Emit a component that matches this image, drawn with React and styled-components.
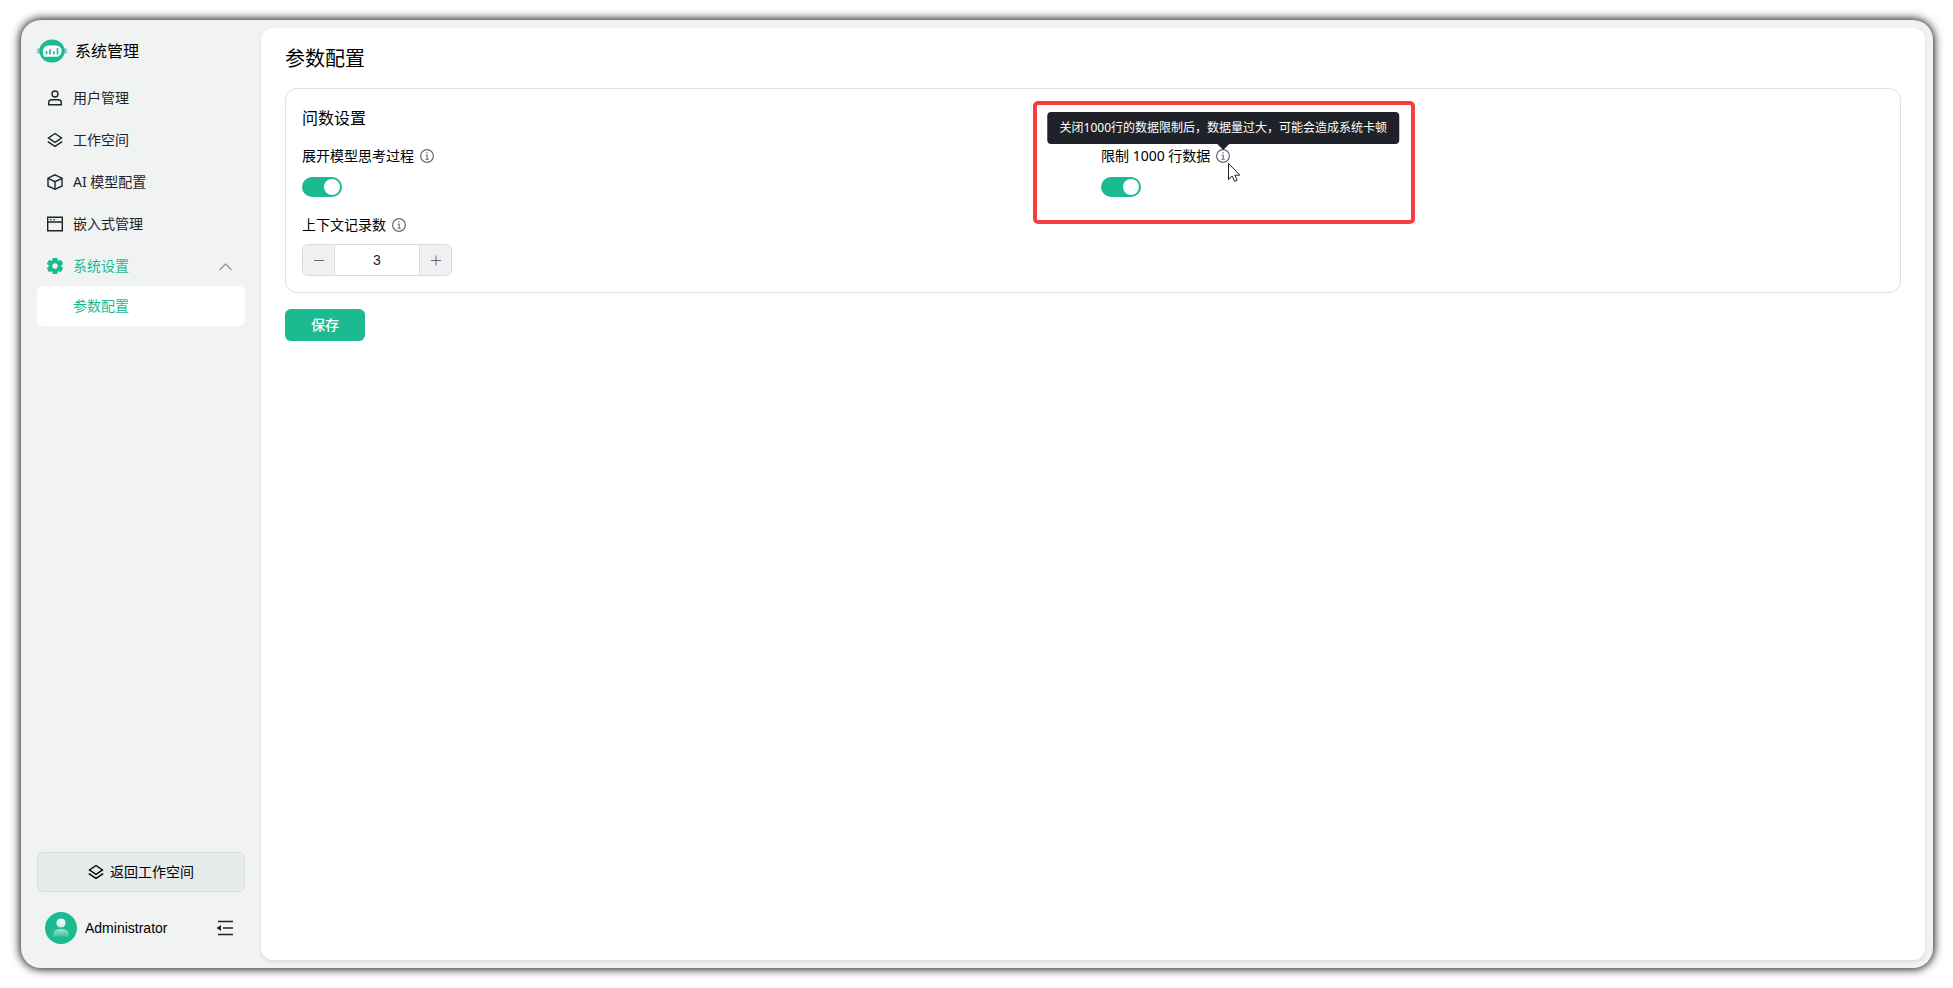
import React, { useState } from 'react'
import styled, { createGlobalStyle } from 'styled-components'

export default function App() {
  const [open, setOpen] = useState(true);
  const [expandThinking, setExpandThinking] = useState(true);
  const [limitRows, setLimitRows] = useState(true);
  const [count, setCount] = useState(3);

  return (
    <Page>
      <GlobalStyle />
      <Shell>
        <Sidebar>
          <Brand>
            <LogoIcon />
            系统管理
          </Brand>

          <Menu>
            <MenuLink href="#user"><UserIcon />用户管理</MenuLink>
            <MenuLink href="#workspace"><LayersIcon />工作空间</MenuLink>
            <MenuLink href="#model"><CubeIcon />AI 模型配置</MenuLink>
            <MenuLink href="#embedded"><WindowIcon />嵌入式管理</MenuLink>
            <div>
              <MenuToggle type="button" aria-expanded={open} onClick={() => setOpen(!open)}>
                <GearIcon />
                系统设置
                <Chevron viewBox="0 0 14 14" $open={open}>
                  <path d="M.5 11 6.500 5l6 6" />
                </Chevron>
              </MenuToggle>
              {open && <SubLink href="#parameter" aria-current="page">参数配置</SubLink>}
            </div>
          </Menu>

          <SidebarFooter>
            <BackButton type="button"><LayersIcon />返回工作空间</BackButton>
            <Account>
              <AvatarIcon />
              <AccountName>Administrator</AccountName>
              <CollapseButton type="button" aria-label="收起侧栏"><CollapseIcon /></CollapseButton>
            </Account>
          </SidebarFooter>
        </Sidebar>

        <Main>
          <Title>参数配置</Title>
          <Card>
            <CardTitle>问数设置</CardTitle>
            <Fields>
              <Field>
                <LabelRow>
                  <label htmlFor="thinking">展开模型思考过程</label>
                  <Hint><InfoIcon /></Hint>
                </LabelRow>
                <Switch
                  id="thinking"
                  type="checkbox"
                  checked={expandThinking}
                  onChange={() => setExpandThinking(!expandThinking)}
                />
              </Field>

              <Field>
                <Highlight />
                <LabelRow>
                  <label htmlFor="limit">限制 1000 行数据</label>
                  <Hint>
                    <InfoIcon />
                    <Tooltip role="tooltip">关闭1000行的数据限制后，数据量过大，可能会造成系统卡顿</Tooltip>
                    <Cursor viewBox="0 0 13 19">
                      <path d="M.5.5v16l3.7-3.4 2.3 5.2 2.6-1.1-2.3-5h5.1z" />
                    </Cursor>
                  </Hint>
                </LabelRow>
                <Switch
                  id="limit"
                  type="checkbox"
                  checked={limitRows}
                  onChange={() => setLimitRows(!limitRows)}
                />
              </Field>

              <Field>
                <LabelRow>
                  <label htmlFor="count">上下文记录数</label>
                  <Hint><InfoIcon /></Hint>
                </LabelRow>
                <Stepper>
                  <StepButton type="button" aria-label="减少" onClick={() => setCount(Math.max(0, count - 1))}>
                    <StepIcon viewBox="0 0 12 12"><path d="M1 6.5h10" /></StepIcon>
                  </StepButton>
                  <StepInput
                    id="count"
                    inputMode="numeric"
                    value={count}
                    onChange={e => setCount(Number(e.target.value) || 0)}
                  />
                  <StepButton type="button" aria-label="增加" onClick={() => setCount(count + 1)}>
                    <StepIcon viewBox="0 0 12 12"><path d="M1 6.5h10M6 1.5v10" /></StepIcon>
                  </StepButton>
                </Stepper>
              </Field>
            </Fields>
          </Card>
          <SaveButton type="button">保存</SaveButton>
        </Main>
      </Shell>
    </Page>
  )
}

function LogoIcon() {
  return (
    <svg width="30" height="24" viewBox="0 0 30 24">
      <rect x="0" y="9" width="4" height="6" rx="2" fill="#7dd5bb" />
      <rect x="26" y="9" width="4" height="6" rx="2" fill="#7dd5bb" />
      <ellipse cx="15" cy="12" rx="12.6" ry="11.6" fill="#1cba90" />
      <path d="M11.500 6.400h7.500a5.600 5.600 0 0 1 0 11.400H7c-.8-1-1.200-3.200-1.200-5.200 0-3.600 2.300-6.200 5.700-6.200z" fill="#fff" />
      <path d="M9.500 12v3.500M13 10v5.500M16.800 12.300v3.200M20.500 9v6.500" stroke="#1cba90" strokeWidth="1.600" fill="none" />
    </svg>
  )
}

function UserIcon() {
  return (
    <LineIcon viewBox="0 0 16 16">
      <circle cx="8" cy="4" r="3" />
      <path d="M1.700 14.800v-2a3 3 0 0 1 3-3h6.600a3 3 0 0 1 3 3v2z" />
    </LineIcon>
  )
}

function LayersIcon() {
  return (
    <LineIcon viewBox="0 0 16 16">
      <path d="M8 1.500 14.500 6 8 10.300 1.500 6z" />
      <path d="m.8 9.700 7.200 4.600 7.200-4.600" />
    </LineIcon>
  )
}

function CubeIcon() {
  return (
    <LineIcon viewBox="0 0 16 16">
      <path d="m8 .8 7 3.400v7.800L8 15.300 1 12V4.200z" />
      <path d="m1 4.400 7 3.300 7-3.300M8 7.700v7.600" />
    </LineIcon>
  )
}

function WindowIcon() {
  return (
    <LineIcon viewBox="0 0 16 16">
      <path d="M.7 1.200h14.600v13.600H.7zM.7 6h14.600M3 3.600h1.500M6.500 3.600H8" />
    </LineIcon>
  )
}

function GearIcon() {
  return (
    <svg width="16" height="16" viewBox="0 0 16 16" fill="#1cba90">
      {[0, 60, 120].map(angle => (
        <rect key={angle} x="5.400" y="-.2" width="5.200" height="16.400" rx="1.400" transform={`rotate(${angle} 8 8)`} />
      ))}
      <circle cx="8" cy="8" r="6.300" />
      <circle cx="8" cy="8" r="2.700" fill="#f1f3f3" />
    </svg>
  )
}

function InfoIcon() {
  return (
    <svg width="14" height="14" viewBox="0 0 14 14" fill="none" stroke="#646a73">
      <circle cx="7" cy="7" r="6.400" strokeWidth="1.200" />
      <path d="M5.600 6.200H7.200v4M5.400 10.200h3.400" strokeWidth="1.100" />
      <path d="M6.300 3.900h1.300" strokeWidth="1.300" />
    </svg>
  )
}

function AvatarIcon() {
  return (
    <svg width="32" height="32" viewBox="0 0 32 32">
      <defs>
        <linearGradient id="head" x1="0" y1="0" x2="0" y2="1">
          <stop offset="0" stopColor="#fff" />
          <stop offset="1" stopColor="#c5ede1" />
        </linearGradient>
        <linearGradient id="torso" x1="0" y1="0" x2="0" y2="1">
          <stop offset="0" stopColor="#a3e1cf" />
          <stop offset="1" stopColor="#3cc4a0" />
        </linearGradient>
      </defs>
      <circle cx="16" cy="16" r="16" fill="#1cba90" />
      <path d="M8 24.500V23a6 6 0 0 1 6-6h4a6 6 0 0 1 6 6v1.500z" fill="url(#torso)" />
      <circle cx="16" cy="11" r="4.600" fill="url(#head)" />
    </svg>
  )
}

function CollapseIcon() {
  return (
    <svg width="18" height="16" viewBox="0 0 18 16" fill="none" stroke="#1f2329" strokeWidth="1.600">
      <path d="M2 1.500h15M7 8h10M2 14.500h15" />
      <path d="M5 5v6L.5 8z" fill="#1f2329" stroke="none" />
    </svg>
  )
}

const GlobalStyle = createGlobalStyle`
  * {
    box-sizing: border-box;
  }

  body {
    margin: 0;
    background: #fff;
  }

  body, button, input {
    font-family: "Noto Sans", "Noto Sans CJK SC", sans-serif;
    font-size: 14px;
    line-height: 22px;
    color: #1f2329;
  }

  svg {
    display: block;
    flex: none;
  }
`

const Page = styled.div`
  display: flex;
  min-height: 100vh;
  padding: 20px 20px 20px 21px;
`

const Shell = styled.div`
  display: flex;
  flex: 1;
  padding: 8px 8px 8px 0;
  background: #f1f3f3;
  border-radius: 20px;
  box-shadow: 0 0 10px 1px rgba(0, 0, 0, 0.95);
`

const Sidebar = styled.aside`
  display: flex;
  flex-direction: column;
  width: 240px;
  padding: 8px 16px;
`

const Brand = styled.div`
  display: flex;
  align-items: center;
  gap: 8px;
  height: 30px;
  margin-bottom: 12px;
  font-size: 16px;
  line-height: 24px;
  color: #000;
`

const Menu = styled.nav`
  display: flex;
  flex-direction: column;
  gap: 2px;
`

const MenuLink = styled.a`
  display: flex;
  align-items: center;
  gap: 10px;
  width: 100%;
  height: 40px;
  padding: 0 12px 0 10px;
  border-radius: 6px;
  color: #1f2329;
  text-decoration: none;
`

const MenuToggle = styled(MenuLink).attrs({ as: 'button' })`
  border: 0;
  background: none;
  color: #1cba90;
  cursor: pointer;
`

const SubLink = styled(MenuLink)`
  padding-left: 36px;
  background: #fff;
  color: #1cba90;
`

const Chevron = styled.svg`
  width: 14px;
  height: 14px;
  margin-left: auto;
  fill: none;
  stroke: #8f959e;
  stroke-width: 1.3;
  transform: ${props => props.$open ? 'none' : 'rotate(180deg)'};
`

const LineIcon = styled.svg`
  width: 16px;
  height: 16px;
  fill: none;
  stroke: currentColor;
  stroke-width: 1.4;
`

const SidebarFooter = styled.div`
  margin-top: auto;
`

const BackButton = styled.button`
  display: flex;
  align-items: center;
  justify-content: center;
  gap: 6px;
  width: 100%;
  height: 40px;
  border: 1px solid #d9dcdf;
  border-radius: 6px;
  background: #e7eaeb;
  color: #000;
  cursor: pointer;
`

const Account = styled.div`
  display: flex;
  align-items: center;
  gap: 8px;
  padding: 20px 11px 8px 8px;
`

const AccountName = styled.span`
  flex: 1;
  font-family: "Liberation Sans", sans-serif;
  color: #000;
`

const CollapseButton = styled.button`
  padding: 0;
  border: 0;
  background: none;
  cursor: pointer;
`

const Main = styled.main`
  flex: 1;
  padding: 16px 24px;
  border-radius: 12px;
  background: #fff;
  box-shadow: 0 2px 4px rgba(31, 35, 41, 0.1);
`

const Title = styled.h1`
  margin: 0 0 14px;
  font-size: 20px;
  font-weight: 400;
  line-height: 30px;
  color: #000;
`

const Card = styled.section`
  padding: 16px;
  border: 1px solid #dee0e3;
  border-radius: 12px;
`

const CardTitle = styled.h2`
  margin: 0 0 14px;
  font-size: 16px;
  font-weight: 400;
  line-height: 26px;
  color: #000;
`

const Fields = styled.div`
  display: grid;
  grid-template-columns: 1fr 1fr;
  gap: 16px;
`

const Field = styled.div`
  position: relative;
  display: flex;
  flex-direction: column;
  align-items: flex-start;
  gap: 8px;
`

const LabelRow = styled.div`
  display: flex;
  align-items: center;
  gap: 6px;
  color: #000;
`

const Hint = styled.span`
  position: relative;
`

const Highlight = styled.div`
  position: absolute;
  top: -44px;
  left: -68px;
  width: 382px;
  height: 123px;
  border: 4px solid #f53f3f;
  border-radius: 5px;
  pointer-events: none;
`

const Tooltip = styled.span`
  position: absolute;
  bottom: 19px;
  left: 50%;
  padding: 5px 12px;
  border-radius: 4px;
  background: #1f2329;
  color: #fff;
  font-size: 12px;
  white-space: nowrap;
  transform: translateX(-50%);

  &::after {
    content: "";
    position: absolute;
    top: 100%;
    left: 50%;
    margin-left: -6px;
    border: 6px solid transparent;
    border-top-color: #1f2329;
    border-bottom: 0;
  }
`

const Cursor = styled.svg`
  position: absolute;
  top: 14px;
  left: 12px;
  width: 13px;
  height: 19px;
  fill: #fff;
  stroke: #1f2329;
  pointer-events: none;
`

const Switch = styled.input`
  appearance: none;
  display: flex;
  align-items: center;
  width: 40px;
  height: 20px;
  margin: 2px 0 1px;
  padding: 2px;
  border-radius: 10px;
  background: ${props => props.checked ? '#1cba90' : '#bbbfc4'};
  cursor: pointer;

  &::before {
    content: "";
    width: 16px;
    height: 16px;
    margin-left: ${props => props.checked ? 'auto' : '0'};
    border-radius: 50%;
    background: #fff;
  }
`

const Stepper = styled.div`
  display: flex;
  width: 150px;
  height: 32px;
  overflow: hidden;
  border: 1px solid #d9dcdf;
  border-radius: 6px;
`

const StepButton = styled.button`
  display: flex;
  align-items: center;
  justify-content: center;
  width: 31px;
  padding: 0;
  border: 0;
  background: #eff0f1;
  cursor: pointer;
`

const StepIcon = styled.svg`
  width: 12px;
  height: 12px;
  fill: none;
  stroke: #646a73;
`

const StepInput = styled.input`
  flex: 1;
  min-width: 0;
  padding: 0;
  border: 1px solid #d9dcdf;
  border-width: 0 1px;
  font-family: "Liberation Sans", sans-serif;
  text-align: center;
`

const SaveButton = styled.button`
  width: 80px;
  height: 32px;
  margin-top: 16px;
  border: 0;
  border-radius: 6px;
  background: #1cba90;
  color: #fff;
  font-weight: 500;
  cursor: pointer;
`
